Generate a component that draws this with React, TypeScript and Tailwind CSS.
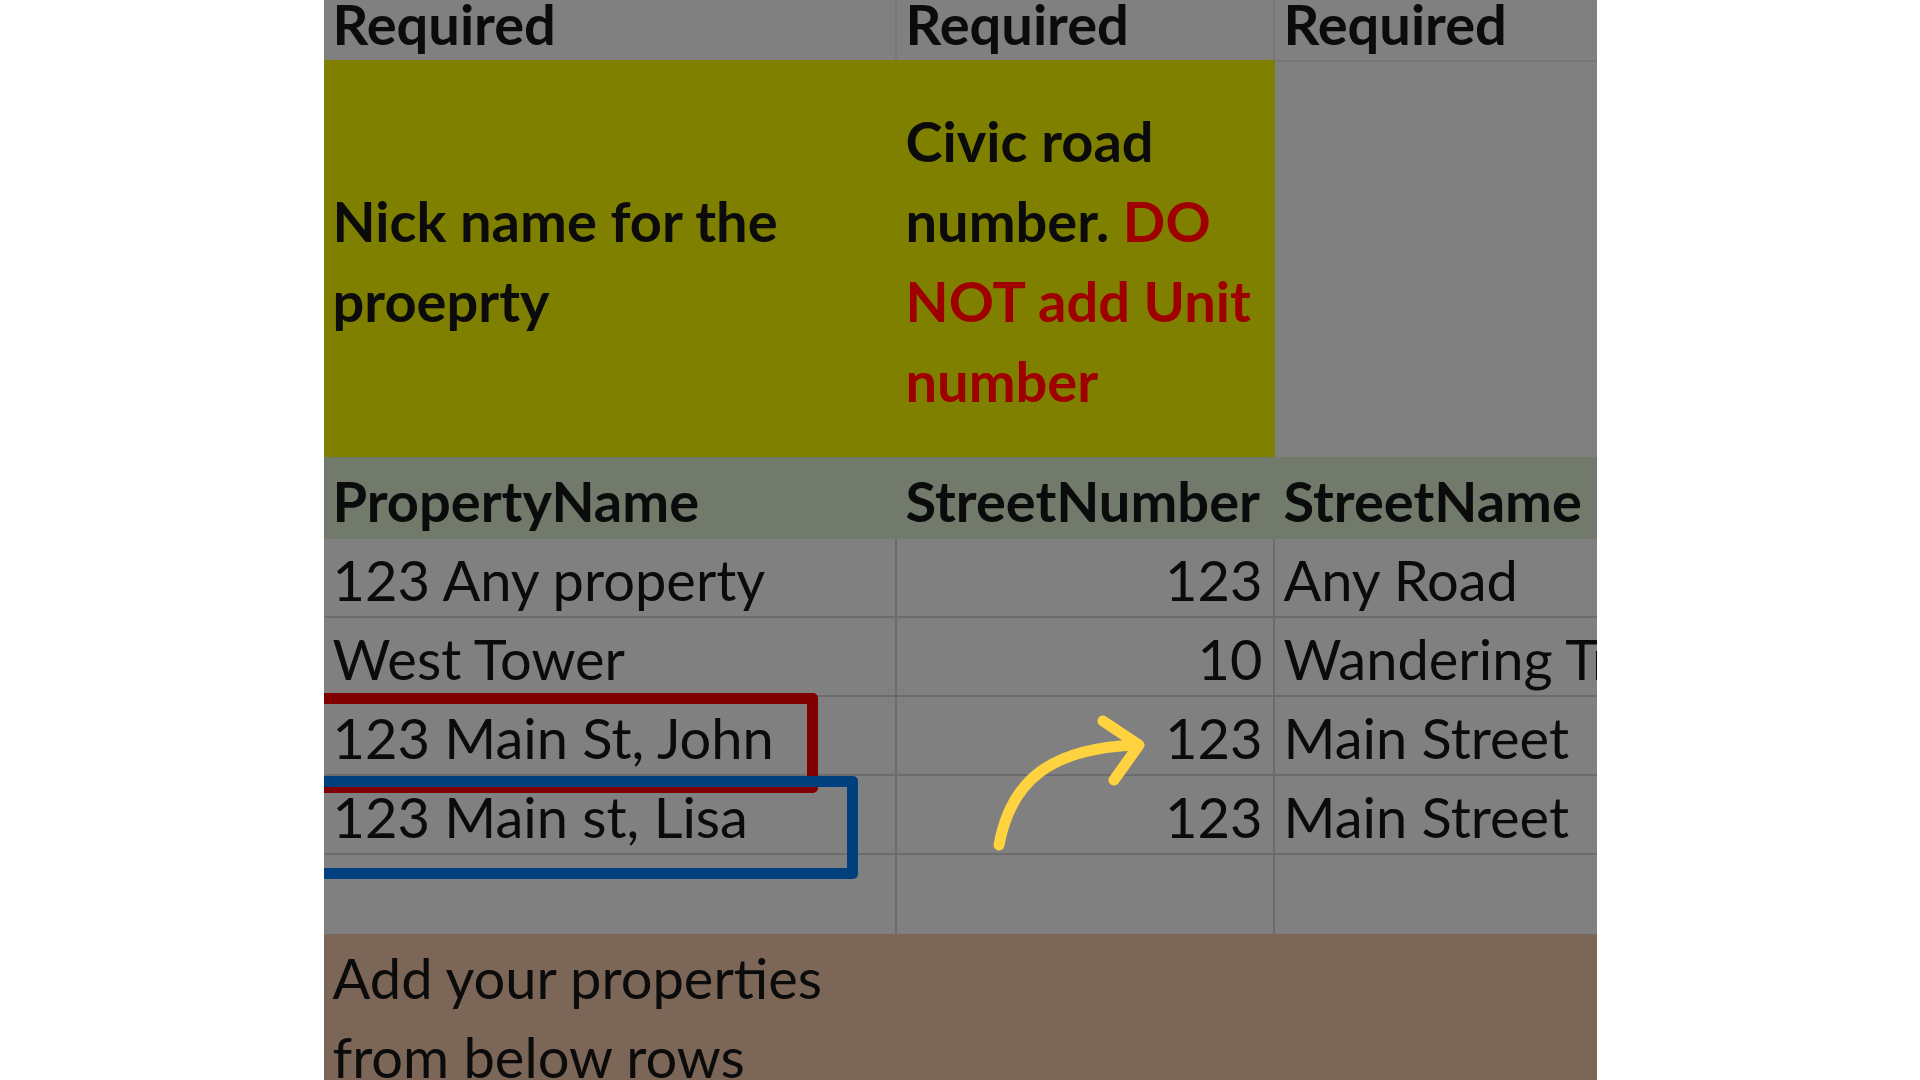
import type { ReactNode } from 'react'

const font = { fontFamily: 'Lato, "Open Sans", Arial, sans-serif' }

type Row = { name: string; number: string; street: string }

const rows: Row[] = [
  { name: '123 Any property', number: '123', street: 'Any Road' },
  { name: 'West Tower', number: '10', street: 'Wandering Trail' },
  { name: '123 Main St, John', number: '123', street: 'Main Street' },
  { name: '123 Main st, Lisa', number: '123', street: 'Main Street' },
  { name: '', number: '', street: '' },
]

function Cell({
  children,
  className = '',
}: {
  children?: ReactNode
  className?: string
}) {
  return (
    <div className={`flex items-end overflow-visible whitespace-nowrap ${className}`}>
      {children}
    </div>
  )
}

export default function App() {
  return (
    <div className="min-h-screen w-full bg-white">
      <div
        className="relative mx-auto h-[1080px] w-[1273px] overflow-hidden bg-[#808080] text-[56px] text-[#0b0b0b]"
        style={font}
      >
        {/* "Required" row */}
        <div className="grid h-[60px] grid-cols-[573px_378px_322px] font-bold leading-[40px]">
          <Cell className="border-r-2 border-[#767676] pb-[16px] pl-[9px]">Required</Cell>
          <Cell className="border-r-2 border-[#767676] pb-[16px] pl-[9px]">Required</Cell>
          <Cell className="pb-[16px] pl-[9px]">Required</Cell>
        </div>

        {/* notes */}
        <div className="grid h-[397px] grid-cols-[573px_378px_322px] font-bold leading-[80px]">
          <div className="flex items-center bg-[#808000] pl-[9px] pt-[4px]">
            <p>
              Nick name for the
              <br />
              proeprty
            </p>
          </div>
          <div className="flex items-center bg-[#808000] pl-[9px] pt-[4px]">
            <p>
              Civic road
              <br />
              number. <span className="text-[#9e0000]">DO</span>
              <br />
              <span className="text-[#9e0000]">NOT add Unit</span>
              <br />
              <span className="text-[#9e0000]">number</span>
            </p>
          </div>
          <div className="border-t-2 border-[#777777]" />
        </div>

        {/* column headers */}
        <div className="grid h-[82px] grid-cols-[573px_378px_322px] bg-[#717a6b] font-bold leading-[56px]">
          <Cell className="pb-[10px] pl-[9px]">PropertyName</Cell>
          <Cell className="pb-[10px] pl-[9px]">StreetNumber</Cell>
          <Cell className="pb-[10px] pl-[9px]">StreetName</Cell>
        </div>

        {rows.map((r, i) => (
          <div
            key={i}
            className={`grid h-[79px] grid-cols-[573px_378px_322px] leading-[56px] ${
              i < rows.length - 1 ? 'border-b-2 border-[#6c6c6c]' : ''
            }`}
          >
            <Cell className="border-r-2 border-[#6c6c6c] pb-[8px] pl-[9px]">{r.name}</Cell>
            <Cell className="justify-end border-r-2 border-[#6c6c6c] pb-[8px] pr-[10px]">
              {r.number}
            </Cell>
            <Cell className="pb-[8px] pl-[9px]">{r.street}</Cell>
          </div>
        ))}

        {/* footer note */}
        <div className="h-[146px] bg-[#7b6657] pl-[9px] pt-[4px] leading-[79px]">
          Add your properties
          <br />
          from below rows
        </div>

        {/* highlight boxes */}
        <div className="absolute left-[-12px] top-[693px] h-[100px] w-[506px] rounded-[5px] border-[11px] border-[#7f0000]" />
        <div className="absolute left-[-12px] top-[776px] h-[103px] w-[546px] rounded-[5px] border-[11px] border-[#00407f]" />

        <svg
          className="pointer-events-none absolute inset-0"
          width="1273"
          height="1080"
          viewBox="0 0 1273 1080"
          fill="none"
        >
          <path
            d="M675 845 C687 780 727 748 813 745"
            stroke="#ffd23f"
            strokeWidth="11"
            strokeLinecap="round"
          />
          <path
            d="M779 721 L815 745 L790 780"
            stroke="#ffd23f"
            strokeWidth="11"
            strokeLinecap="round"
            strokeLinejoin="round"
          />
        </svg>
      </div>
    </div>
  )
}
